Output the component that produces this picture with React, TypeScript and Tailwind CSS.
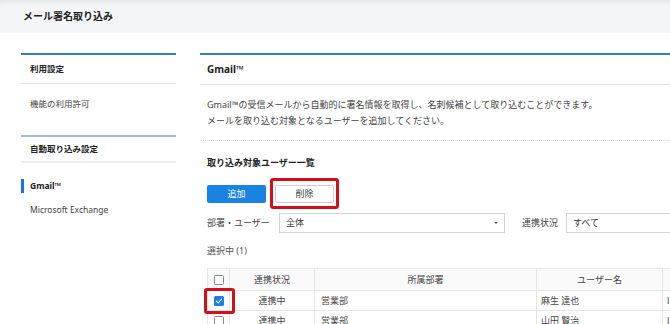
const font = "font-['Noto_Sans','Noto_Sans_CJK_JP',sans-serif]";

function Checkbox({ checked = false }: { checked?: boolean }) {
	if (checked) {
		return (
			<span className="flex h-[10px] w-[10px] items-center justify-center rounded-[1.5px] bg-[#1a7fe6]">
				<svg viewBox="0 0 10 10" className="h-[8px] w-[8px]">
					<path d="M1.8 5.2 L4 7.3 L8.3 2.6" fill="none" stroke="white" strokeWidth="1.4" strokeLinecap="round" strokeLinejoin="round" />
				</svg>
			</span>
		);
	}
	return <span className="block h-[10px] w-[10px] rounded-[1.5px] border border-[#8a8a8a] bg-white" />;
}

function SelectBox({ value, width }: { value: string; width: string }) {
	return (
		<div className={`flex h-[20px] items-center justify-between border border-[#d4d4d4] bg-white pl-[6px] pr-[6px] ${width}`}>
			<span>{value}</span>
			<span className="h-0 w-0 border-x-[2px] border-t-[2.5px] border-x-transparent border-t-[#555]" />
		</div>
	);
}

const rows = [
	{ checked: true, status: "連携中", dept: "営業部", name: "麻生 達也" },
	{ checked: false, status: "連携中", dept: "営業部", name: "山田 賢治" },
];

export default function App() {
	return (
		<div className={`relative h-[324px] w-[670px] overflow-hidden bg-white text-[9px] text-[#333] ${font}`}>
			{/* Page header */}
			<header className="flex h-[33px] items-center bg-[#f4f5f7] pl-[23px] text-[10px] font-bold text-[#222] shadow-[inset_0_5px_5px_-3px_rgba(0,0,0,0.07)]">
				メール署名取り込み
			</header>

			<div className="flex gap-[24px] pl-[21px] pt-[20px]">
				{/* Sidebar */}
				<aside className="w-[155px] shrink-0 text-[8.5px]">
					<div className="border-t-2 border-[#3b7cc0]">
						<div className="flex h-[29px] items-center border-b border-[#e2e2e2] pl-[9px] font-bold text-[#222]">
							利用設定
						</div>
						<div className="flex h-[41px] items-center pl-[9px] text-[#444]">機能の利用許可</div>
					</div>
					<div className="mt-[10px] border-t-2 border-[#a2badb]">
						<div className="flex h-[26px] items-center border-b-2 border-[#ececec] pl-[9px] font-bold text-[#222]">
							自動取り込み設定
						</div>
						<div className="pt-[10px]">
							<div className="flex h-[25px] items-center">
								<span className="border-l-[3px] border-[#1a73e8] pl-[6px] font-bold leading-[14px] text-[#222]">Gmail™</span>
							</div>
							<div className="flex h-[25px] items-center pl-[9px] text-[#444]">Microsoft Exchange</div>
						</div>
					</div>
				</aside>

				{/* Main panel */}
				<main className="w-[560px] shrink-0 border-t-2 border-[#3b7cc0]">
					<div className="flex h-[30px] items-center border-b border-[#e2e2e2] pl-[7px] text-[10px] font-bold text-[#222]">
						Gmail™
					</div>

					<div className="px-[7px] pt-[12px] leading-[16px] text-[#444]">
						<p>Gmail™の受信メールから自動的に署名情報を取得し、名刺候補として取り込むことができます。</p>
						<p>メールを取り込む対象となるユーザーを追加してください。</p>
					</div>

					<div className="mt-[11px] border-b border-dotted border-[#dcdcdc]" />

					<div className="px-[7px]">
						<h2 className="mt-[16px] h-[12px] leading-[12px] font-bold text-[#222]">取り込み対象ユーザー一覧</h2>

						{/* Buttons */}
						<div className="mt-[16px] flex gap-[9px]">
							<button className="h-[18px] w-[59px] rounded-[2px] bg-[#1a82e2] text-white">追加</button>
							<button className="h-[18px] w-[59px] rounded-[2px] border border-[#cfcfcf] bg-white text-[#444]">削除</button>
						</div>

						{/* Filters */}
						<div className="mt-[10px] flex h-[20px] items-center">
							<span className="w-[72px] text-[#444]">部署・ユーザー</span>
							<SelectBox value="全体" width="w-[226px]" />
							<span className="ml-[17px] w-[44px] text-[#444]">連携状況</span>
							<SelectBox value="すべて" width="w-[120px]" />
						</div>

						<p className="mt-[12px] h-[12px] leading-[12px] text-[#555]">選択中 (1)</p>

						{/* Table */}
						<table className="mt-[11px] w-[540px] table-fixed border-collapse">
							<colgroup>
								<col className="w-[22px]" />
								<col className="w-[85px]" />
								<col className="w-[222px]" />
								<col className="w-[126px]" />
								<col />
							</colgroup>
							<thead>
								<tr className="h-[22px] bg-[#fafafa] text-[#444]">
									<th className="border border-[#e6e6e6] font-normal">
										<div className="flex justify-center">
											<Checkbox />
										</div>
									</th>
									<th className="border border-[#e6e6e6] font-normal">連携状況</th>
									<th className="border border-[#e6e6e6] font-normal">所属部署</th>
									<th className="border border-[#e6e6e6] font-normal">ユーザー名</th>
									<th className="border border-[#e6e6e6] font-normal" />
								</tr>
							</thead>
							<tbody>
								{rows.map((r) => (
									<tr key={r.name} className="h-[20px] text-[#444]">
										<td className="border border-[#e6e6e6]">
											<div className="flex justify-center">
												<Checkbox checked={r.checked} />
											</div>
										</td>
										<td className="border border-[#e6e6e6] text-center">{r.status}</td>
										<td className="border border-[#e6e6e6] pl-[6px]">{r.dept}</td>
										<td className="border border-[#e6e6e6] pl-[4px]">{r.name}</td>
										<td className="border border-[#e6e6e6] pl-[4px]">l</td>
									</tr>
								))}
							</tbody>
						</table>
					</div>
				</main>
			</div>

			{/* Annotation highlights */}
			<div className="absolute left-[270px] top-[178px] h-[31px] w-[69px] rounded-[3px] border-[3px] border-[#d0111b]" />
			<div className="absolute left-[204px] top-[288px] h-[26px] w-[31px] rounded-[3px] border-[3px] border-[#d0111b]" />
		</div>
	);
}
